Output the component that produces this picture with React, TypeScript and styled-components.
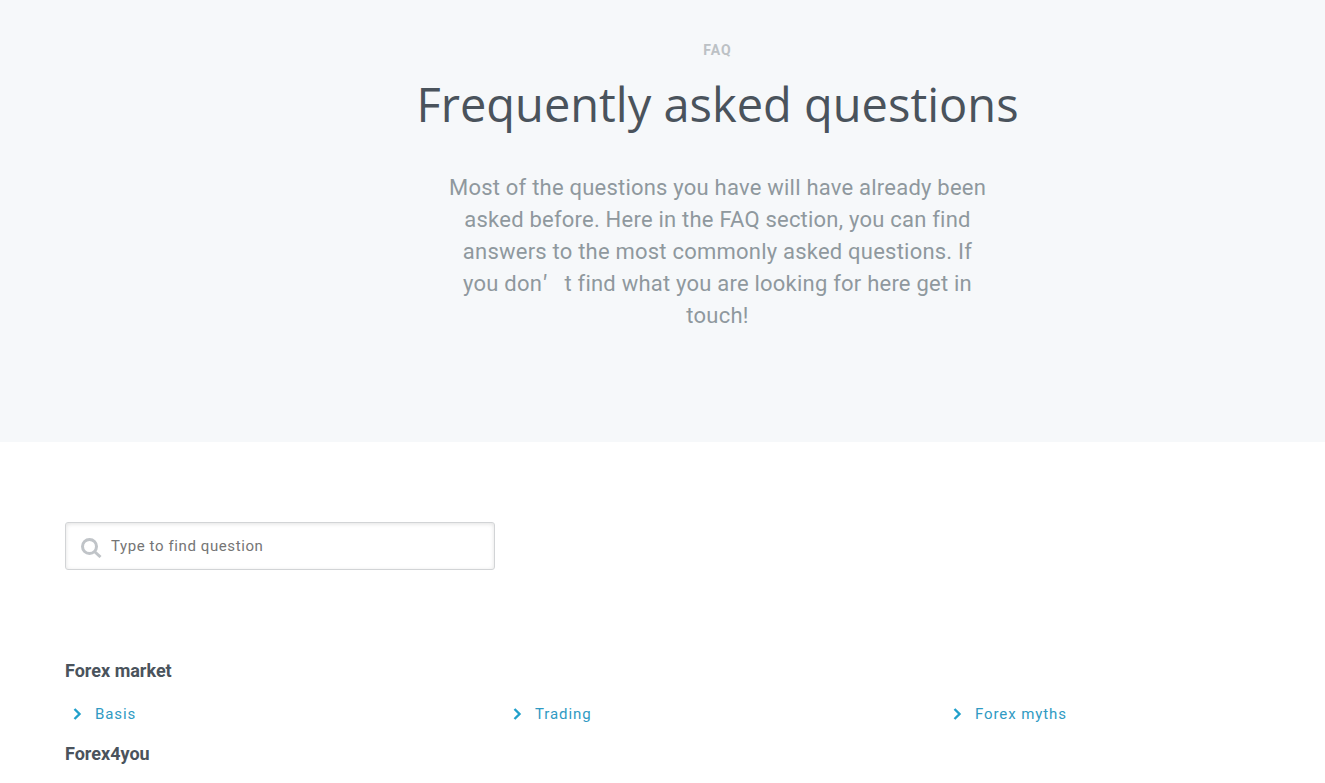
import React from "react";
import styled, { createGlobalStyle } from "styled-components";

const GlobalStyle = createGlobalStyle`
  * { box-sizing: border-box; }
  body { margin: 0; background: #fff; font-family: Roboto, sans-serif; color: #4a535c; overflow-x: hidden; }
`;

const Hero = styled.header`
  display: flex;
  flex-direction: column;
  align-items: center;
  padding: 40px 0 110px 110px;
  background: #f6f8fa;
  text-align: center;
`;

const Eyebrow = styled.p`
  margin: 0;
  font-size: 14px;
  line-height: 20px;
  font-weight: 700;
  letter-spacing: 1px;
  color: #bcc1c5;
`;

const Title = styled.h1`
  margin: 12px 0 36px;
  font-family: "Open Sans", sans-serif;
  font-size: 47px;
  line-height: 64px;
  font-weight: 400;
`;

const Intro = styled.p`
  width: 100%;
  max-width: 540px;
  margin: 0;
  font-size: 22px;
  line-height: 32px;
  letter-spacing: 0.01em;
  color: #8f989e;
`;

const WideQuote = styled.span`
  margin-right: 16px;
  font-family: "Noto Sans CJK SC", sans-serif;
  line-height: 1;
`;

const Content = styled.main`
  padding: 80px 0 0 65px;
`;

const SearchBox = styled.label`
  display: flex;
  align-items: center;
  width: 100%;
  max-width: 430px;
  height: 48px;
  padding: 0 14px;
  gap: 7px;
  border: 1px solid #d2d4d6;
  border-radius: 3px;
  box-shadow: inset 0 1px 4px rgba(0, 0, 0, 0.12);
`;

const SearchInput = styled.input`
  flex: 1;
  min-width: 0;
  padding: 0;
  border: 0;
  outline: 0;
  background: transparent;
  font: 15px/20px Roboto, sans-serif;
  letter-spacing: 0.04em;
  &::placeholder { color: #757575; opacity: 1; }
`;

const Topics = styled.div`
  margin-top: 89px;
`;

const TopicTitle = styled.h2`
  margin: 0;
  font-size: 18px;
  line-height: 24px;
  font-weight: 700;
`;

const TopicList = styled.ul`
  display: grid;
  grid-template-columns: repeat(3, 1fr);
  margin: 19px -60px 16px 0;
  padding: 0;
  list-style: none;
`;

const TopicItem = styled.li`
  display: flex;
`;

const TopicLink = styled.a`
  display: inline-flex;
  align-items: center;
  gap: 12px;
  padding-left: 8px;
  font-size: 15px;
  line-height: 24px;
  letter-spacing: 0.06em;
  color: #2f9ac3;
  text-decoration: none;
`;

const links = ["Basis", "Trading", "Forex myths"];

export default function App() {
  return (
    <>
      <GlobalStyle />
      <Hero>
        <Eyebrow>FAQ</Eyebrow>
        <Title>Frequently asked questions</Title>
        <Intro>
          Most of the questions you have will have already been asked before. Here in the FAQ section, you can find
          answers to the most commonly asked questions. If you don<WideQuote>′</WideQuote>t find what you are looking
          for here get in touch!
        </Intro>
      </Hero>
      <Content>
        <SearchBox>
          <svg width="24" height="24" viewBox="0 0 24 24" fill="none" stroke="#c0c4c8" strokeWidth="3" aria-hidden="true">
            <circle cx="9.5" cy="12.5" r="7" />
            <path d="M15 18l5.5 5" />
          </svg>
          <SearchInput type="text" placeholder="Type to find question" aria-label="Type to find question" />
        </SearchBox>
        <Topics>
          <TopicTitle>Forex market</TopicTitle>
          <TopicList>
            {links.map((label) => (
              <TopicItem key={label}>
                <TopicLink href="#">
                  <svg width="10" height="12" viewBox="0 0 10 12" fill="none" stroke="#22a0cb" strokeWidth="2.4" aria-hidden="true">
                    <path d="M1.5 1l5 5-5 5" />
                  </svg>
                  {label}
                </TopicLink>
              </TopicItem>
            ))}
          </TopicList>
          <TopicTitle>Forex4you</TopicTitle>
        </Topics>
      </Content>
    </>
  );
}
